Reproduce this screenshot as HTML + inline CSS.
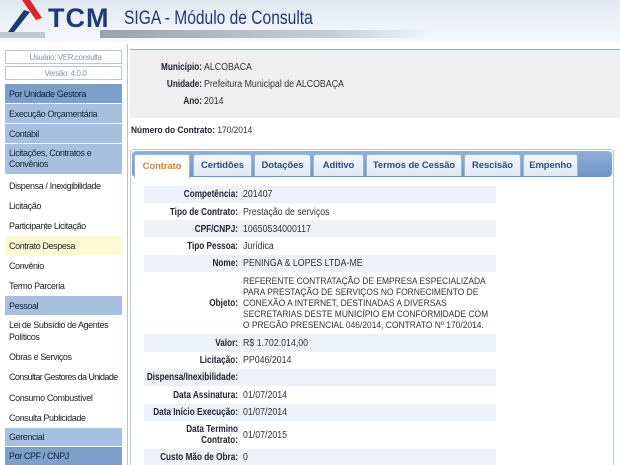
<!DOCTYPE html>
<html><head><meta charset="utf-8"><style>
*{margin:0;padding:0;box-sizing:border-box}
body{width:620px;height:465px;overflow:hidden;background:#fff;font-family:"Liberation Sans",Arial,sans-serif;position:relative;font-size:10px;color:#333}
.a{position:absolute}
.hdr{left:0;top:0;width:620px;height:42px;background:linear-gradient(#dfe8f2,#eef3f8 60%,#f6f8fb)}
.side{left:5px;width:117px;padding-left:4px;display:flex;align-items:center;font-size:9px;letter-spacing:-0.4px;white-space:nowrap;overflow:hidden}
.b1{background:#7d9fcc;color:#123}
.b2{background:#a8c0e0;color:#123}
.w{color:#222}
.lb{position:absolute;left:100px;width:138px;text-align:right;font-weight:bold;color:#223;font-size:10px;white-space:nowrap;transform:scaleX(.82);transform-origin:right center}
.vl{position:absolute;left:243px;font-size:10px;color:#333;white-space:nowrap;transform:scaleX(.88);transform-origin:left center}
.st{position:absolute;left:144px;width:352px;background:#edf2f8}
.tab{position:absolute;top:154px;height:22px;background:linear-gradient(#f4f8fc,#dfe9f4);border:1px solid #9bb7d6;border-bottom:none;border-radius:3px 3px 0 0;color:#2a4f7c;font-weight:bold;font-size:9.5px;display:flex;align-items:center;justify-content:center;white-space:nowrap;letter-spacing:-0.1px}
</style></head><body>
<div class="a hdr"></div>
<div class="a" style="left:100px;top:30px;width:330px;height:8px;background:linear-gradient(90deg,#9aa3ad,#c8ced5 70%,rgba(230,234,238,0))"></div>
<div class="a" style="left:0;top:32px;width:45px;height:6px;background:#c3c8cf"></div>
<svg class="a" style="left:0;top:0" width="50" height="40"><polygon points="22,0 30,0 42,18 36,20" fill="#e0232b"/><polygon points="8,32 14,32 30,12 24,10" fill="#1e3a78"/></svg>
<div class="a" style="left:48px;top:3px;font-size:27px;font-weight:bold;color:#1e3a78;letter-spacing:1px">TCM</div>
<div class="a" style="left:124px;top:8px;font-size:19px;color:#1e3a78;white-space:nowrap;transform:scaleX(.82);transform-origin:left center">SIGA - Módulo de Consulta</div>
<div class="a" style="left:127px;top:44px;width:1px;height:421px;background:#b8c4d2"></div>
<div class="a" style="left:130px;top:49px;width:490px;height:1px;background:#8fa8c4"></div>
<div class="a" style="left:130px;top:50px;width:490px;height:68px;background:#efefef"></div>
<div class="a side" style="top:50px;height:14px;border:1px solid #b8c8d8;justify-content:center;color:#8a96a4;font-size:8px">Usuário: VER.consulta</div>
<div class="a side" style="top:66px;height:14px;border:1px solid #b8c8d8;justify-content:center;color:#8a96a4;font-size:8px">Versão: 4.0.0</div>
<div class="a side b1" style="top:84px;height:19px">Por Unidade Gestora</div>
<div class="a side b2" style="top:104px;height:19px">Execução Orçamentária</div>
<div class="a side b2" style="top:124px;height:19px">Contábil</div>
<div class="a side b2" style="top:144px;height:30px;line-height:11px">Licitações, Contratos e<br>Convênios</div>
<div class="a side w" style="top:176px;height:19px">Dispensa / Inexigibilidade</div>
<div class="a side w" style="top:196px;height:19px">Licitação</div>
<div class="a side w" style="top:216px;height:19px">Participante Licitação</div>
<div class="a side w" style="top:236px;height:19px;background:#fdfbd4">Contrato Despesa</div>
<div class="a side w" style="top:256px;height:19px">Convênio</div>
<div class="a side w" style="top:276px;height:19px">Termo Parceria</div>
<div class="a side b2" style="top:296px;height:19px">Pessoal</div>
<div class="a side w" style="top:317px;height:28px;line-height:12px">Lei de Subsídio de Agentes<br>Políticos</div>
<div class="a side w" style="top:347px;height:19px">Obras e Serviços</div>
<div class="a side w" style="top:367px;height:19px;letter-spacing:-0.6px">Consultar Gestores da Unidade</div>
<div class="a side w" style="top:388px;height:19px">Consumo Combustível</div>
<div class="a side w" style="top:408px;height:19px">Consulta Publicidade</div>
<div class="a side b2" style="top:428px;height:18px">Gerencial</div>
<div class="a side b1" style="top:447px;height:18px">Por CPF / CNPJ</div>

<div class="lb" style="top:62px;left:60px;width:142px">Município:</div>
<div class="vl" style="top:62px;left:204px">ALCOBACA</div>
<div class="lb" style="top:79px;left:60px;width:142px">Unidade:</div>
<div class="vl" style="top:79px;left:204px">Prefeitura Municipal de ALCOBAÇA</div>
<div class="lb" style="top:96px;left:60px;width:142px">Ano:</div>
<div class="vl" style="top:96px;left:204px">2014</div>
<div class="a" style="left:131px;top:125px;font-size:9.5px;white-space:nowrap;transform:scaleX(.88);transform-origin:left center"><b style="color:#223">Número do Contrato:</b> 170/2014</div>

<div class="a" style="left:130px;top:149px;width:484px;height:316px;border:1px solid #b5c8dc;border-bottom:none;border-radius:4px 4px 0 0"></div>
<div class="a" style="left:132px;top:151px;width:480px;height:26px;background:linear-gradient(#8fb0d8,#6f96c8);border-radius:4px"></div>
<div class="tab" style="left:134px;width:56px;background:#fff;color:#d8823a;height:24px">Contrato</div>
<div class="tab" style="left:193px;width:59px">Certidões</div>
<div class="tab" style="left:254px;width:57px">Dotações</div>
<div class="tab" style="left:313px;width:51px">Aditivo</div>
<div class="tab" style="left:366px;width:96px">Termos de Cessão</div>
<div class="tab" style="left:464px;width:57px">Rescisão</div>
<div class="tab" style="left:523px;width:55px">Empenho</div>

<div class="st" style="top:186px;height:17px"></div>
<div class="st" style="top:220px;height:17px"></div>
<div class="st" style="top:255px;height:17px"></div>
<div class="st" style="top:334px;height:18px"></div>
<div class="st" style="top:369px;height:17px"></div>
<div class="st" style="top:404px;height:17px"></div>
<div class="st" style="top:449px;height:16px"></div>

<div class="lb" style="top:189px">Competência:</div><div class="vl" style="top:189px">201407</div>
<div class="lb" style="top:207px">Tipo de Contrato:</div><div class="vl" style="top:207px">Prestação de serviços</div>
<div class="lb" style="top:224px">CPF/CNPJ:</div><div class="vl" style="top:224px">10650534000117</div>
<div class="lb" style="top:241px">Tipo Pessoa:</div><div class="vl" style="top:241px">Jurídica</div>
<div class="lb" style="top:258px">Nome:</div><div class="vl" style="top:258px">PENINGA &amp; LOPES LTDA-ME</div>
<div class="lb" style="top:298px">Objeto:</div>
<div class="vl" style="top:276px;line-height:11px;font-size:9.6px">REFERENTE CONTRATAÇÃO DE EMPRESA ESPECIALIZADA<br>PARA PRESTAÇÃO DE SERVIÇOS NO FORNECIMENTO DE<br>CONEXÃO A INTERNET, DESTINADAS A DIVERSAS<br>SECRETARIAS DESTE MUNICÍPIO EM CONFORMIDADE COM<br>O PREGÃO PRESENCIAL 046/2014, CONTRATO Nº 170/2014.</div>
<div class="lb" style="top:338px">Valor:</div><div class="vl" style="top:338px">R$ 1.702.014,00</div>
<div class="lb" style="top:355px">Licitação:</div><div class="vl" style="top:355px">PP046/2014</div>
<div class="lb" style="top:372px">Dispensa/Inexibilidade:</div>
<div class="lb" style="top:390px">Data Assinatura:</div><div class="vl" style="top:390px">01/07/2014</div>
<div class="lb" style="top:407px">Data Início Execução:</div><div class="vl" style="top:407px">01/07/2014</div>
<div class="lb" style="top:424px;line-height:11px">Data Termino<br>Contrato:</div><div class="vl" style="top:430px">01/07/2015</div>
<div class="lb" style="top:452px">Custo Mão de Obra:</div><div class="vl" style="top:452px">0</div>
</body></html>
